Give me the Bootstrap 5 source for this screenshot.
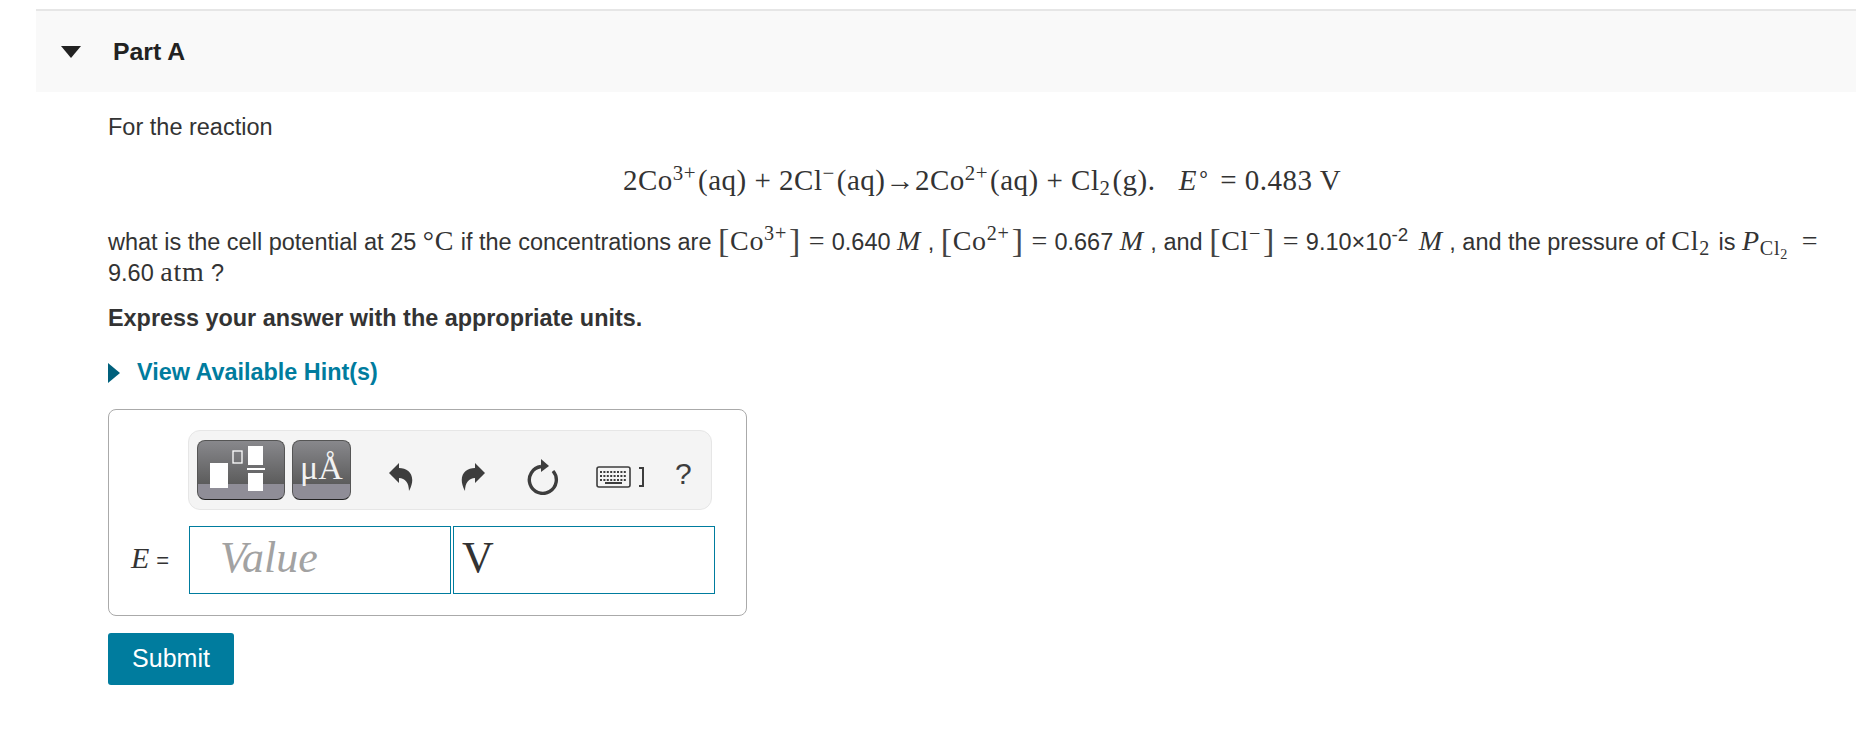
<!DOCTYPE html>
<html lang="en">
<head>
  <meta charset="UTF-8" />
  <title>Part A</title>
  <link rel="stylesheet" href="https://cdn.jsdelivr.net/npm/bootstrap@5.3.3/dist/css/bootstrap.min.css" />
  <style>
    body { font-family: "Liberation Sans", Arial, sans-serif; font-size: 23.5px; color: #333; background: #fff; }
    .part-wrap { margin: 9px 12px 0 36px; border-top: 2px solid #e6e6e6; }
    .part-head { height: 81px; background: #f9f9f9; padding-left: 25px; gap: 32px; }
    .part-head b { font-size: 24.8px; color: #222; font-weight: 700; }
    .part-body { padding: 20px 0 0 72px; }
    .tx { font-family: "Liberation Serif", "Times New Roman", serif; font-size: 28px; letter-spacing: .7px; line-height: 1; }
    .tx i { font-style: italic; }
    .tx sup, .tx sub { font-size: 72%; line-height: 0; margin-right: 2px; }
    .tx sub sub { font-size: 70%; margin: 0 4px 0 0; }
    .big-br { font-size: 34px; font-weight: 300; line-height: 0; color: #444; vertical-align: -2px; }
    .para { line-height: 31px; margin: 0; white-space: nowrap; }
    .equation { height: 54px; margin-top: 10px; padding-left: 515px; line-height: 54px; font-size: 29px; letter-spacing: .5px; word-spacing: 0; white-space: nowrap; }
    .line-tx { margin-top: 20px; }
    .exp { font-size: 80%; line-height: 0; margin-right: 4px; }
    .note { margin-top: 14px; font-weight: 700; font-size: 23.4px; line-height: 31px; }
    .hint-line { margin-top: 23px; line-height: 31px; color: #007c9e; font-weight: 700; font-size: 23.4px; gap: 17px; }
    .answer-box { width: 639px; height: 207px; margin-top: 21px; border: 1px solid #aaa; border-radius: 8px; padding: 20px 0 0 22px; }
    .tool-row { margin-left: 57px; width: 524px; height: 80px; background: #f4f4f4; border: 1px solid #e6e6e6; border-radius: 12px; padding-left: 8px; }
    .tile { height: 60px; border: 1px solid #555; border-bottom-color: #222; border-radius: 8px; background: linear-gradient(#88888c 0%, #5c5c5c 74%, #8f8d97 75%, #8f8d97 100%); }
    .tile-a { width: 88px; }
    .tile-b { width: 59px; margin-left: 7px; font-family: "Liberation Serif", serif; font-size: 34px; line-height: 54px; color: #f2f2f2; text-align: center; }
    .tool-icon { fill: #3d3d3d; margin-top: 14px; flex: none; }
    .tool-help { margin-left: 30px; margin-top: 6px; color: #3d3d3d; font-size: 30px; }
    .entry-row { margin-top: 16px; }
    .entry-label { width: 58px; font-size: 22px; font-weight: 500; white-space: nowrap; }
    .entry-label .tx { font-size: 30px; }
    .entry { width: 262px; height: 68px; border: 1px solid #007c9e; font-family: "Liberation Serif", serif; font-size: 44px; line-height: 62px; }
    .entry + .entry { margin-left: 2px; }
    .entry-val { padding-left: 30px; color: #a2a2a2; font-style: italic; }
    .entry-unit { padding-left: 8px; color: #333; }
    .submit-btn { margin-top: 17px; width: 126px; height: 52px; background: #007c9e; color: #fff; border: 0; border-radius: 3px; font-size: 25px; padding: 0; }
  </style>
</head>
<body>
  <div class="part-wrap">
    <div class="part-head d-flex align-items-center">
      <svg width="20" height="12" viewBox="0 0 20 12"><path d="M0 0H20L10 12Z" fill="#222"/></svg>
      <b>Part A</b>
    </div>
    <div class="part-body">
      <p class="para">For the reaction</p>
      <div class="equation tx">2Co<sup>3+</sup>(aq) + 2Cl<sup>−</sup>(aq)→2Co<sup>2+</sup>(aq) + Cl<sub>2</sub>(g). &nbsp;&nbsp;<i>E</i><sup>∘</sup> = 0.483 V</div>
      <p class="para line-tx">what is the cell potential at 25 <span class="tx">°C</span> if the concentrations are <span class="tx"><span class="big-br">[</span>Co<sup>3+</sup><span class="big-br">]</span> =</span> 0.640 <span class="tx"><i>M</i></span> , <span class="tx"><span class="big-br">[</span>Co<sup>2+</sup><span class="big-br">]</span> =</span> 0.667 <span class="tx"><i>M</i></span> , and <span class="tx"><span class="big-br">[</span>Cl<sup>−</sup><span class="big-br">]</span> =</span> 9.10×10<sup class="exp">-2</sup> <span class="tx"><i>M</i></span> , and the pressure of <span class="tx">Cl<sub>2</sub></span> is <span class="tx"><i>P</i><sub>Cl<sub>2</sub></sub> =</span><br>9.60 <span class="tx">atm</span> ?</p>
      <div class="note">Express your answer with the appropriate units.</div>
      <div class="hint-line d-flex align-items-center">
        <svg width="12" height="20" viewBox="0 0 12 20"><path d="M0 0L12 10L0 20Z" fill="#00607c"/></svg>
        <span>View Available Hint(s)</span>
      </div>
      <div class="answer-box">
        <div class="tool-row d-flex align-items-center">
          <div class="tile tile-a">
            <svg width="86" height="58" viewBox="0 0 86 58" class="d-block">
              <rect x="12" y="22" width="18" height="25" fill="#fff"/>
              <rect x="35" y="10" width="9" height="12" fill="none" stroke="#fff" stroke-width="1.3"/>
              <rect x="50" y="5" width="15" height="19" fill="#fff"/>
              <rect x="49" y="27" width="18" height="2" fill="#fff"/>
              <rect x="50" y="32" width="15" height="18" fill="#fff"/>
            </svg>
          </div>
          <div class="tile tile-b">μÅ</div>
          <svg class="tool-icon" style="margin-left:38px" width="25" height="29" viewBox="0 0 25 29"><path d="M0 10L10 0V5C20 5 28 13 20 28C20 20 16 15 10 15V20Z"/></svg>
          <svg class="tool-icon" style="margin-left:46px" width="25" height="29" viewBox="0 0 25 29"><path d="M25 10L15 0V5C5 5 -3 13 5 28C5 20 9 15 15 15V20Z"/></svg>
          <svg class="tool-icon" style="margin-left:42px" width="32" height="36" viewBox="0 0 32 36"><path d="M14 7.5A13.5 13.5 0 1 0 26 12" fill="none" stroke="#3d3d3d" stroke-width="3.4"/><path d="M14 0L22 7L14 13Z" fill="#3d3d3d"/></svg>
          <svg class="tool-icon" style="margin-left:37px" width="36" height="22" viewBox="0 0 36 22">
            <rect x="1" y="1" width="33" height="20" rx="2" fill="#f4f4f4" stroke="#3d3d3d" stroke-width="1.6"/>
            <path d="M4 6H31M4 10H31M4 14H31" stroke="#3d3d3d" stroke-width="2" stroke-dasharray="2 1.4" fill="none"/>
            <rect x="9" y="16" width="17" height="2" fill="#3d3d3d"/>
          </svg>
          <svg class="tool-icon" style="margin-left:7px" width="6" height="20" viewBox="0 0 6 20"><path d="M0 1H4V19H0" fill="none" stroke="#3d3d3d" stroke-width="2"/></svg>
          <span class="tool-help">?</span>
        </div>
        <div class="entry-row d-flex align-items-center">
          <div class="entry-label"><span class="tx"><i>E</i></span> =</div>
          <div class="entry entry-val">Value</div>
          <div class="entry entry-unit">V</div>
        </div>
      </div>
      <button type="button" class="btn submit-btn">Submit</button>
    </div>
  </div>
  <script src="https://cdn.jsdelivr.net/npm/bootstrap@5.3.3/dist/js/bootstrap.bundle.min.js"></script>
</body>
</html>
